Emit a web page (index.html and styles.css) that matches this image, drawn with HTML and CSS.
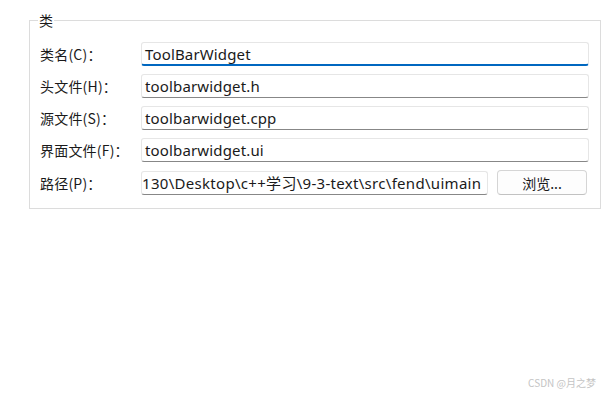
FILE: index.html
```html
<!DOCTYPE html>
<html lang="zh">
<head>
<meta charset="utf-8">
<link rel="stylesheet" href="styles.css">
</head>
<body>
<fieldset class="group">
  <legend class="group-title">类</legend>
  <div class="form">
    <label class="label">类名(C)：</label>
    <div class="field focused"><span class="value">ToolBarWidget</span></div>
    <label class="label">头文件(H)：</label>
    <div class="field"><span class="value">toolbarwidget.h</span></div>
    <label class="label">源文件(S)：</label>
    <div class="field"><span class="value">toolbarwidget.cpp</span></div>
    <label class="label">界面文件(F)：</label>
    <div class="field"><span class="value">toolbarwidget.ui</span></div>
    <label class="label">路径(P)：</label>
    <div class="path-row">
      <div class="field path"><span class="value">130\Desktop\c++学习\9-3-text\src\fend\uimain</span></div>
      <button class="btn">浏览...</button>
    </div>
  </div>
</fieldset>
<div class="watermark">CSDN @月之梦</div>
</body>
</html>
```
FILE: styles.css
```css
html, body {
  margin: 0;
  padding: 0;
  background: #ffffff;
}
body {
  width: 612px;
  height: 396px;
  position: relative;
  font-family: "Noto Sans", "Noto Sans CJK SC", sans-serif;
  color: #1a1a1a;
}
.group {
  box-sizing: border-box;
  margin: 10px 0 0 29px;
  width: 572px;
  height: 199px;
  border: 1px solid #dcdcdc;
  padding: 12px 11px 0 10px;
}
.group-title {
  padding: 0 1px;
  margin-left: -2px;
  font-family: "Noto Sans CJK SC", sans-serif;
  font-size: 14px;
  line-height: 20px;
}
.form {
  display: grid;
  grid-template-columns: 101px 1fr;
  row-gap: 8px;
  align-items: center;
}
.label {
  font-family: "Noto Sans CJK SC", sans-serif;
  font-size: 14px;
  line-height: 24px;
  letter-spacing: 0.2px;
  white-space: nowrap;
}
.field {
  box-sizing: border-box;
  height: 24px;
  border: 1px solid #e6e6e6;
  border-bottom: 1px solid #878787;
  border-radius: 3px;
  background: #ffffff;
  padding: 0 4px 0 3px;
  display: flex;
  align-items: center;
  overflow: hidden;
  white-space: nowrap;
}
.field.focused {
  border-bottom: 2px solid #0067c0;
}
.value {
  font-size: 15px;
  line-height: 22px;
  letter-spacing: 0.15px;
  color: #1a1a1a;
}
.path-row {
  display: flex;
  gap: 9px;
  align-items: center;
}
.field.path {
  width: 347px;
  padding: 0 1px 0 0;
}
.field.path .value {
  letter-spacing: 0.3px;
}
.btn {
  box-sizing: border-box;
  width: 90px;
  height: 25px;
  border: 1px solid #d5d5d5;
  border-bottom-color: #c2c2c2;
  border-radius: 4px;
  background: #fdfdfd;
  font-family: "Noto Sans CJK SC", sans-serif;
  font-size: 14px;
  color: #1a1a1a;
  padding: 0;
}
.watermark {
  position: absolute;
  right: 16px;
  bottom: 6px;
  font-family: "Noto Sans CJK SC", sans-serif;
  font-size: 10px;
  color: #c4c4c4;
}
```
